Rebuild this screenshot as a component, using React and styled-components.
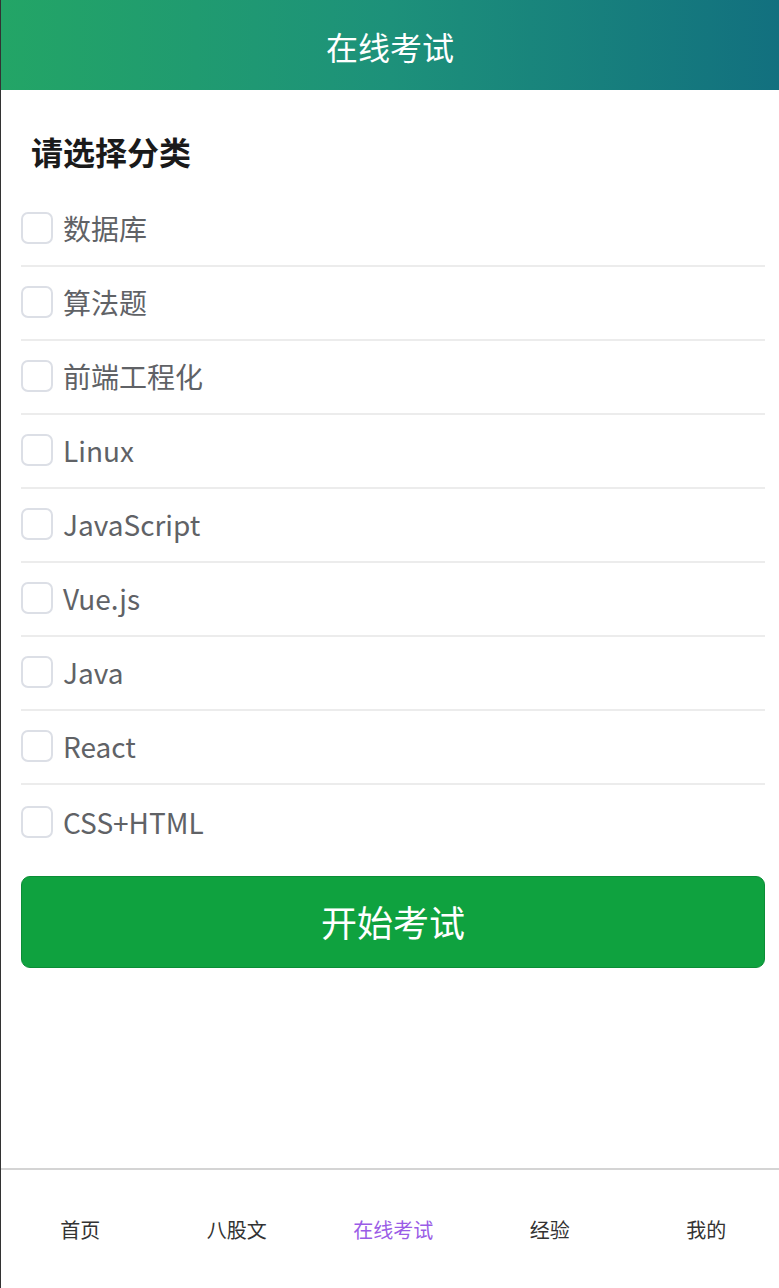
import React, { useState } from 'react';
import styled, { createGlobalStyle } from 'styled-components';

// --- Styles --- //

const GlobalStyle = createGlobalStyle`
  html, body {
    margin: 0;
    padding: 0;
    background: #fff;
  }
  * {
    box-sizing: border-box;
  }
  body {
    font-family: "Noto Sans CJK SC", "Noto Sans", sans-serif;
  }
`

const Page = styled.div`
  border-left: 1px solid #333;
  display: flex;
  flex-direction: column;
  min-height: 100vh;
  overflow: hidden;
`

const TopBar = styled.header`
  align-items: center;
  background: linear-gradient(90deg, #23a566 0%, #1d917a 50%, #12707f 100%);
  color: #fff;
  display: flex;
  font-size: 32px;
  height: 90px;
  justify-content: center;
  padding-top: 2px;
`

const Content = styled.main`
  padding: 0 14px 0 20px;
`

const Heading = styled.h2`
  color: #1a1a1a;
  font-size: 32px;
  font-weight: 700;
  line-height: 40px;
  margin: 41px 0 22px;
  padding-left: 10px;
`

const List = styled.ul`
  list-style: none;
  margin: 0;
  padding: 0;
`

const Row = styled.li`
  align-items: center;
  border-bottom: ${p => (p.last ? 'none' : '2px solid #ececec')};
  cursor: pointer;
  display: flex;
  gap: 10px;
  height: 74px;
  padding-bottom: ${p => (p.last ? '0' : '2px')};
`

const Box = styled.span`
  background: ${p => (p.checked ? '#0fa23f' : '#fff')};
  border: 2px solid ${p => (p.checked ? '#0fa23f' : '#dcdfe6')};
  border-radius: 7px;
  flex-shrink: 0;
  height: 32px;
  width: 32px;
`

const Label = styled.span`
  color: #606266;
  font-size: 28px;
`

const StartButton = styled.button`
  background: #0fa23f;
  border: 1px solid #0b8d36;
  border-radius: 9px;
  color: #fff;
  cursor: pointer;
  display: block;
  font-family: inherit;
  font-size: 36px;
  height: 92px;
  margin-top: 17px;
  padding-bottom: 4px;
  width: 100%;
`

const Tabs = styled.nav`
  border-top: 2px solid #d4d4d4;
  display: grid;
  grid-template-columns: repeat(5, 156.5px);
  height: 120px;
  margin-top: auto;
  padding-left: 1px;
`

const Tab = styled.a`
  align-items: center;
  color: ${p => (p.active ? '#9a5ce6' : '#333')};
  display: flex;
  font-size: 20px;
  justify-content: center;
  text-decoration: none;
`

// --- Component --- //

const categories = ['数据库', '算法题', '前端工程化', 'Linux', 'JavaScript', 'Vue.js', 'Java', 'React', 'CSS+HTML'];
const tabs = ['首页', '八股文', '在线考试', '经验', '我的'];

const App = () => {
  const [picked, setPicked] = useState([]);

  const toggle = (name) => {
    setPicked(picked.includes(name) ? picked.filter(n => n !== name) : [...picked, name]);
  }

  return (
    <Page>
      <GlobalStyle />
      <TopBar>在线考试</TopBar>
      <Content>
        <Heading>请选择分类</Heading>
        <List>
          {categories.map((name, i) => (
            <Row key={name} last={i === categories.length - 1} onClick={() => toggle(name)}>
              <Box checked={picked.includes(name)} />
              <Label>{name}</Label>
            </Row>
          ))}
        </List>
        <StartButton>开始考试</StartButton>
      </Content>
      <Tabs>
        {tabs.map(t => (
          <Tab key={t} active={t === '在线考试'}>{t}</Tab>
        ))}
      </Tabs>
    </Page>
  )
}

export default App;
